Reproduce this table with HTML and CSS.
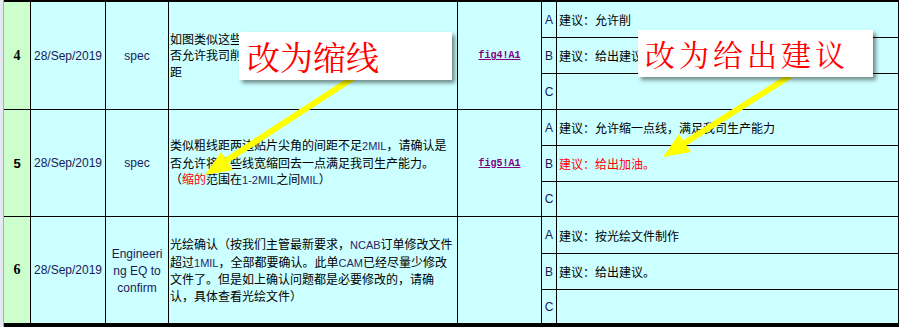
FILE: index.html
```html
<!DOCTYPE html>
<html lang="zh-CN">
<head>
<meta charset="utf-8">
<title>EQ</title>
<link rel="stylesheet" href="styles.css">
</head>
<body>
<div class="page">
  <div class="strip"></div>
  <div class="sheet">
    <div class="cell num serif">4</div>
    <div class="cell date">28/Sep/2019</div>
    <div class="cell type">spec</div>
    <div class="cell desc"><div class="txt">如图类似这些位置线到铜皮的间距不足，请确认是<br>否允许我司削铜皮来满足生产的最小间<br>距</div></div>
    <div class="cell link"><span class="ref">fig4!A1</span></div>
    <div class="cell opt">A</div><div class="cell sug">建议：允许削</div>
    <div class="cell opt">B</div><div class="cell sug">建议：给出建议</div>
    <div class="cell opt">C</div><div class="cell sug"></div>

    <div class="cell num sans">5</div>
    <div class="cell date">28/Sep/2019</div>
    <div class="cell type">spec</div>
    <div class="cell desc"><div class="txt">类似粗线距两边贴片尖角的间距不足<span class="lat">2MIL</span>，请确认是<br>否允许将这些线宽缩回去一点满足我司生产能力。<br>（<span class="red">缩的</span>范围在<span class="lat">1-2MIL</span>之间<span class="lat">MIL</span>）</div></div>
    <div class="cell link"><span class="ref">fig5!A1</span></div>
    <div class="cell opt">A</div><div class="cell sug">建议：允许缩一点线，满足我司生产能力</div>
    <div class="cell opt">B</div><div class="cell sug red">建议：给出加油。</div>
    <div class="cell opt">C</div><div class="cell sug"></div>

    <div class="cell num serif">6</div>
    <div class="cell date">28/Sep/2019</div>
    <div class="cell type multi"><div class="txt">Engineeri<br>ng EQ to<br>confirm</div></div>
    <div class="cell desc"><div class="txt">光绘确认（按我们主管最新要求，<span class="lat">NCAB</span>订单修改文件<br>超过<span class="lat">1MIL</span>，全部都要确认。此单<span class="lat">CAM</span>已经尽量少修改<br>文件了。但是如上确认问题都是必要修改的，请确<br>认，具体查看光绘文件）</div></div>
    <div class="cell link"></div>
    <div class="cell opt">A</div><div class="cell sug">建议：按光绘文件制作</div>
    <div class="cell opt">B</div><div class="cell sug">建议：给出建议。</div>
    <div class="cell opt">C</div><div class="cell sug"></div>
  </div>

  <svg class="arrows" width="901" height="327" viewBox="0 0 901 327">
    <line x1="356" y1="76" x2="224" y2="162" stroke="#ffff00" stroke-width="6"/>
    <polygon points="205,175 233,170 221,152" fill="#ffff00"/>
    <line x1="790" y1="76" x2="683" y2="144" stroke="#ffff00" stroke-width="6"/>
    <polygon points="663,157 691,152 679,134" fill="#ffff00"/>
  </svg>
  <div class="note note1">改为缩线</div>
  <div class="note note2">改为给出建议</div>
</div>
</body>
</html>
```

FILE: styles.css
```css
html, body {
  margin: 0;
  padding: 0;
  background: #ffffff;
}

.page {
  position: relative;
  width: 901px;
  height: 327px;
  display: flex;
  overflow: hidden;
}

.strip {
  width: 3px;
  height: 327px;
  background: #e6e9f2;
  border-right: 1px solid #9fb0cc;
}

.sheet {
  display: grid;
  grid-template-columns: 26px 74px 62px 288px 83px 14px 341px;
  grid-template-rows: 35px 35px 35px 35px 35px 34px 36px 35px 33px;
  gap: 1px;
  background: #000000;
  padding: 2px 1px 1px 0;
  border-bottom: 3px double #000000;
  align-self: flex-start;
}

.cell {
  background: #ccffff;
  display: flex;
  align-items: center;
  font-family: "Liberation Sans", Arial, sans-serif;
  font-size: 12px;
  color: #1a1a5a;
  overflow: hidden;
}

.num {
  grid-row: span 3;
  background: #ccffcc;
  justify-content: center;
  color: #000000;
  font-weight: bold;
}

.num.serif {
  font-family: "Liberation Serif", "Times New Roman", serif;
  font-size: 14px;
}

.num.sans {
  font-family: "Liberation Sans", Arial, sans-serif;
  font-size: 13px;
}

.date,
.type,
.desc,
.link {
  grid-row: span 3;
}

.date,
.type {
  justify-content: center;
  text-align: center;
}

.multi .txt {
  line-height: 17px;
  padding-top: 2px;
}

.desc {
  padding-left: 1px;
  font-family: "Noto Sans CJK SC", sans-serif;
  font-size: 12px;
  color: #000000;
  white-space: nowrap;
}

.desc .txt {
  line-height: 16.5px;
}

.lat {
  font-family: "Liberation Sans", Arial, sans-serif;
  font-size: 11px;
  color: #26266a;
}

.red {
  color: #ff0000;
}

.link {
  justify-content: center;
}

.ref {
  font-family: "Liberation Mono", "Courier New", monospace;
  font-size: 10px;
  font-weight: bold;
  color: #800080;
  text-decoration: underline;
}

.opt {
  justify-content: center;
  font-family: "Liberation Sans", Arial, sans-serif;
  font-size: 12px;
  color: #1a1a5a;
}

.sug {
  padding-left: 2px;
  font-family: "Noto Sans CJK SC", sans-serif;
  font-size: 12px;
  color: #000000;
  white-space: nowrap;
}

.sug.red {
  color: #ff0000;
}

.arrows {
  position: absolute;
  left: 0;
  top: 0;
  z-index: 1;
}

.note {
  position: absolute;
  z-index: 2;
  background: #ffffff;
  box-shadow: 3px 3px 4px rgba(0, 0, 0, 0.45);
  color: #ff0000;
  font-family: "Noto Serif CJK SC", "Noto Sans CJK SC", serif;
  white-space: nowrap;
  box-sizing: border-box;
}

.note1 {
  left: 239px;
  top: 32px;
  width: 213px;
  height: 48px;
  padding-left: 8px;
  font-size: 33px;
  line-height: 48px;
}

.note2 {
  left: 638px;
  top: 30px;
  width: 235px;
  height: 47px;
  padding-left: 7px;
  font-size: 30px;
  line-height: 47px;
  letter-spacing: 4px;
}
```
